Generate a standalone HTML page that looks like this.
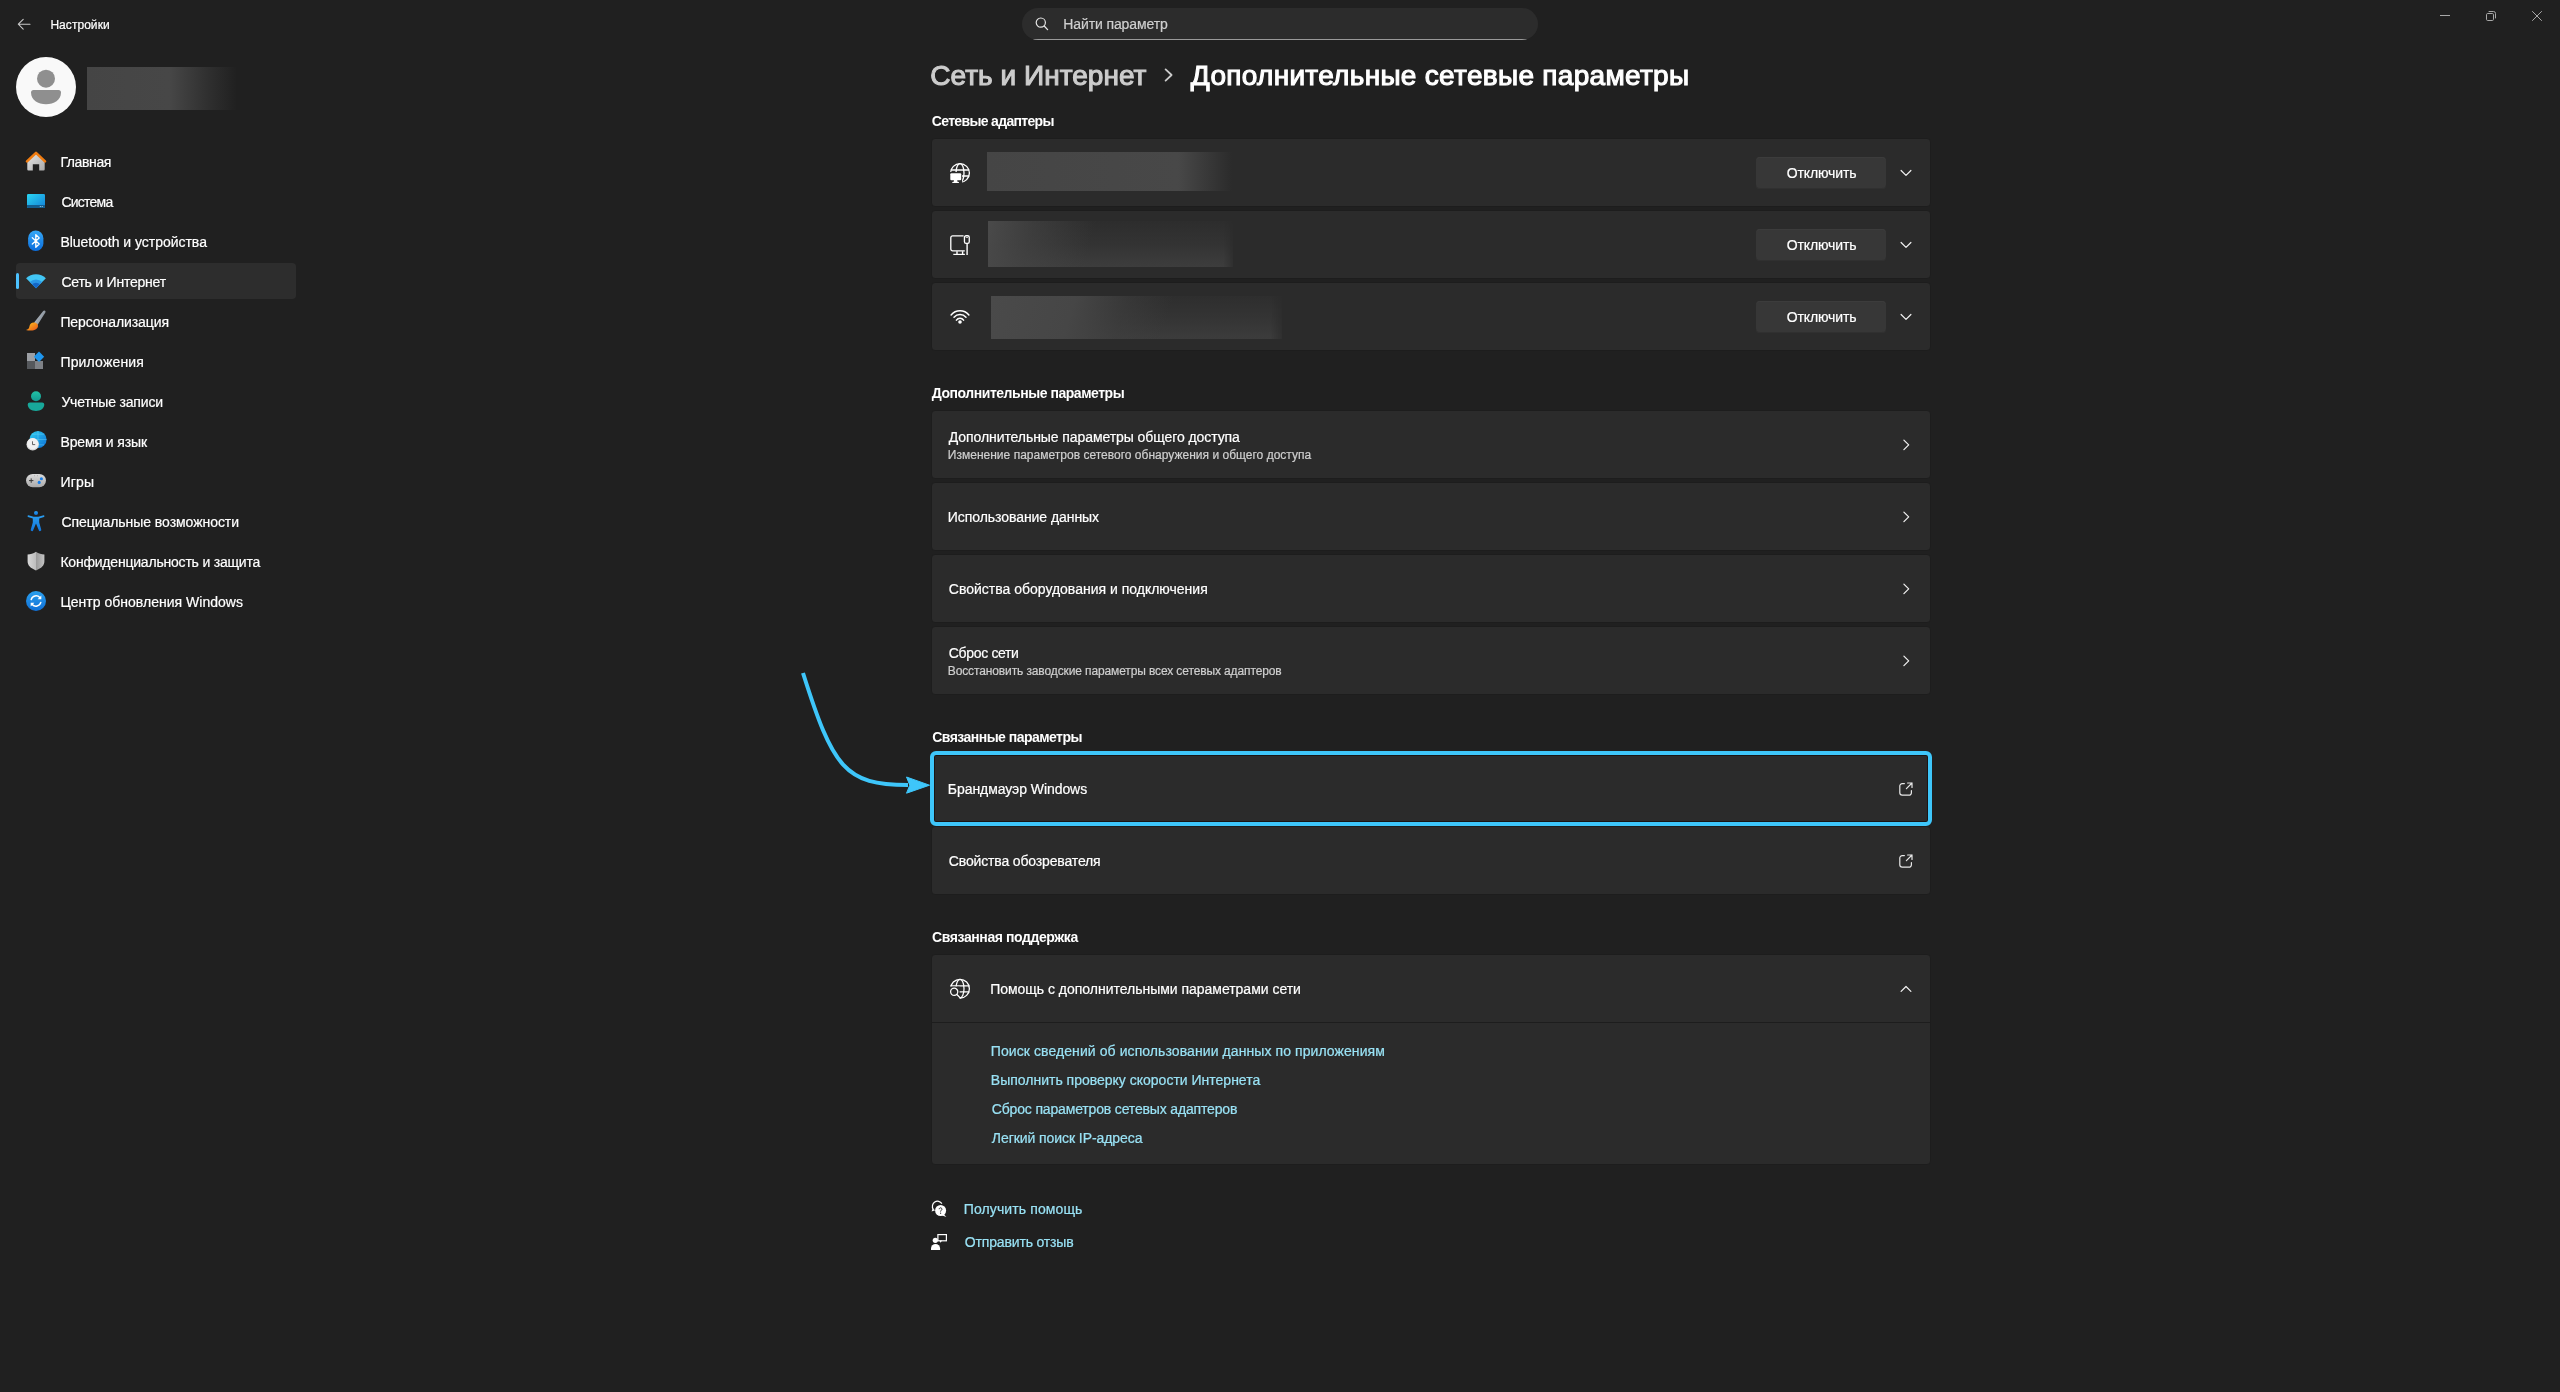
<!DOCTYPE html>
<html><head><meta charset="utf-8">
<style>
html,body{margin:0;padding:0;width:2560px;height:1392px;overflow:hidden;background:#202020;font-family:"Liberation Sans",sans-serif;}
.tx{position:absolute;white-space:pre;line-height:normal;}
.ab{position:absolute;}
.card{position:absolute;left:931px;width:998px;background:#2b2b2b;border:1px solid #1d1d1d;border-radius:4px;}
.btn{position:absolute;left:1756px;width:130px;height:32px;background:#373737;border-radius:4px;box-shadow:inset 0 1px 0 #3c3c3c, inset 0 -1px 0 #303030;}
svg{position:absolute;overflow:visible;}
</style></head><body>
<!-- back arrow -->
<svg class="ab" style="left:0;top:0" width="40" height="48"><path d="M30,24.2H18.5M23.2,19.3L18.3,24.2L23.2,29.1" fill="none" stroke="#c8c8c8" stroke-width="1.1" stroke-linecap="round" stroke-linejoin="round"/></svg>

<!-- search box -->
<div class="ab" style="left:1022px;top:8px;width:516px;height:32px;border-radius:16px;background:#2c2c2c;overflow:hidden"><div class="ab" style="left:0;top:31px;width:516px;height:1px;background:#9a9a9a"></div></div>
<svg style="left:1030px;top:12px" width="24" height="24"><circle cx="10.8" cy="10.6" r="4.6" fill="none" stroke="#e6e6e6" stroke-width="1.2"/><path d="M14.2,14L17.6,17.6" stroke="#e6e6e6" stroke-width="1.3" stroke-linecap="round"/></svg>

<!-- window controls -->
<div class="ab" style="left:2440px;top:15px;width:10px;height:1px;background:#a8a8a8"></div>
<svg style="left:2480px;top:5px" width="24" height="24"><rect x="6.5" y="8.5" width="7" height="7" rx="1.2" fill="none" stroke="#a8a8a8" stroke-width="1"/><path d="M8.6,6.5H13.5A2,2 0 0 1 15.5,8.5V13.4" fill="none" stroke="#a8a8a8" stroke-width="1"/></svg>
<svg style="left:2528px;top:7px" width="20" height="20"><path d="M4.2,4.2L13.8,13.8M13.8,4.2L4.2,13.8" stroke="#a8a8a8" stroke-width="1"/></svg>

<!-- avatar -->
<svg style="left:16px;top:57px" width="60" height="60"><circle cx="30" cy="30" r="30" fill="#f9f9f9"/><circle cx="30" cy="21.7" r="9" fill="#8f8f8f"/><path d="M17.5,33H42.5A2.5,2.5 0 0 1 45,35.5C45,43 38,47.2 30,47.2C22,47.2 15,43 15,35.5A2.5,2.5 0 0 1 17.5,33Z" fill="#8f8f8f"/></svg>
<div class="ab" style="left:87px;top:67px;width:150px;height:43px;background:linear-gradient(90deg,#454545 0%,#474747 55%,#303030 80%,#202020 100%)"></div>

<!-- nav selection -->
<div class="ab" style="left:16px;top:263px;width:280px;height:36px;background:#2d2d2d;border-radius:4px"></div>
<div class="ab" style="left:16px;top:273px;width:3px;height:16px;background:#4cc2ff;border-radius:2px"></div>

<!-- nav icons -->
<svg style="left:26px;top:151px" width="20" height="20">
 <defs><linearGradient id="hg" x1="0" y1="0" x2="1" y2="1"><stop offset="0" stop-color="#e8e8e8"/><stop offset="1" stop-color="#a9a9a9"/></linearGradient></defs>
 <path d="M1.3,10.6L10,2.6L18.7,10.6V18.3A1.2,1.2 0 0 1 17.5,19.6H13.2V13.3H6.8V19.6H2.5A1.2,1.2 0 0 1 1.3,18.3Z" fill="url(#hg)"/>
 <path d="M1,10.4L10,1.9L19,10.4" fill="none" stroke="#f07c10" stroke-width="2.6" stroke-linejoin="round" stroke-linecap="round"/>
</svg>
<svg style="left:26px;top:191px" width="20" height="20">
 <defs><linearGradient id="sg" x1="0" y1="0" x2="1" y2="1"><stop offset="0" stop-color="#2ad6f2"/><stop offset="1" stop-color="#1380d8"/></linearGradient></defs>
 <rect x="1" y="3" width="18" height="14" rx="1.3" fill="url(#sg)"/>
 <path d="M1,14H19V15.7A1.3,1.3 0 0 1 17.7,17H2.3A1.3,1.3 0 0 1 1,15.7Z" fill="#135d8f"/>
 <circle cx="14.3" cy="15.5" r="0.55" fill="#b8e4f8"/><circle cx="16.2" cy="15.5" r="0.55" fill="#b8e4f8"/>
</svg>
<svg style="left:26px;top:231px" width="20" height="20">
 <defs><linearGradient id="bg1" x1="0" y1="0" x2="0" y2="1"><stop offset="0" stop-color="#36a8f6"/><stop offset="1" stop-color="#0a6cdc"/></linearGradient></defs>
 <rect x="2.1" y="-0.4" width="15.3" height="20.4" rx="7.6" fill="url(#bg1)"/>
 <path d="M6.3,6.8L13.2,13L9.8,16.2V3.6L13.2,6.9L6.3,13.1" fill="none" stroke="#fff" stroke-width="1.3" stroke-linejoin="round" stroke-linecap="round"/>
</svg>
<svg style="left:26px;top:271px" width="20" height="20">
 <path d="M0.1,7.3A14,14 0 0 1 19.9,7.3L10,17.2Z" fill="#42c6f5"/>
 <path d="M3.85,11.05A8.7,8.7 0 0 1 16.15,11.05L10,17.2Z" fill="#2a96e6"/>
 <path d="M6.11,13.31A5.5,5.5 0 0 1 13.89,13.31L10,17.2Z" fill="#1466c6"/>
</svg>
<svg style="left:26px;top:311px" width="20" height="20">
 <defs><linearGradient id="pg" x1="0" y1="0" x2="1" y2="0.6"><stop offset="0" stop-color="#c9d0d8"/><stop offset="1" stop-color="#7a838d"/></linearGradient>
 <linearGradient id="og" x1="0" y1="0" x2="1" y2="1"><stop offset="0" stop-color="#ffc81e"/><stop offset="1" stop-color="#e9521a"/></linearGradient></defs>
 <path d="M17.24,0.05A1.3,1.3 0 0 1 19.36,1.55L11.5,14L8.1,11.6Z" fill="url(#pg)"/>
 <path d="M7.6,11.4C9.8,11.2 12,12.6 12,14.8C12,17.8 9,19.6 5,19.6C3,19.6 1,19.4 0,19C1.8,18.4 3,17.6 3.4,15.4C3.8,12.8 5.6,11.5 7.6,11.4Z" fill="url(#og)"/>
</svg>
<svg style="left:26px;top:351px" width="20" height="20">
 <rect x="1" y="2" width="8" height="8" fill="#9c9fa4"/><rect x="1" y="10" width="8" height="8" fill="#55585c"/><rect x="9" y="10" width="8" height="8" fill="#7e8186"/>
 <path d="M13,0.6L18.2,5.8L13,11L7.8,5.8Z" fill="#1e96ee"/>
</svg>
<svg style="left:26px;top:391px" width="20" height="20">
 <defs><linearGradient id="acg" x1="0" y1="0" x2="0" y2="1"><stop offset="0" stop-color="#22c2a6"/><stop offset="1" stop-color="#129a92"/></linearGradient></defs>
 <circle cx="10" cy="5.2" r="5" fill="url(#acg)"/>
 <path d="M3.9,11.4H16.1A2.2,2.2 0 0 1 18.3,13.6C18.3,17.4 14.6,20 10,20C5.4,20 1.7,17.4 1.7,13.6A2.2,2.2 0 0 1 3.9,11.4Z" fill="#18a89a"/>
</svg>
<svg style="left:26px;top:431px" width="20" height="20">
 <defs><linearGradient id="gg" x1="0" y1="0" x2="1" y2="1"><stop offset="0" stop-color="#2fd0f0"/><stop offset="1" stop-color="#0d6fd6"/></linearGradient></defs>
 <circle cx="12" cy="8.5" r="8.6" fill="url(#gg)"/>
 <path d="M12,0V17M3.4,8.5H20.6M6,3.2H18M6,13.8H18" stroke="#7fe0f8" stroke-width="0.5" opacity="0.7"/>
 <circle cx="6.7" cy="13.3" r="6.2" fill="#d7d7d7"/>
 <circle cx="6.7" cy="12.6" r="5.6" fill="#f0f0f0"/>
 <path d="M6.5,10.3V13.6H9.2" fill="none" stroke="#555" stroke-width="0.9"/>
</svg>
<svg style="left:26px;top:471px" width="20" height="20">
 <defs><linearGradient id="cg" x1="0" y1="0" x2="0" y2="1"><stop offset="0" stop-color="#dcdcdc"/><stop offset="1" stop-color="#a9a9a9"/></linearGradient></defs>
 <rect x="0" y="2.9" width="20" height="13.4" rx="6.7" fill="url(#cg)"/>
 <path d="M3,9.6H7.4M5.2,7.4V11.8" stroke="#3a3a3a" stroke-width="1"/>
 <circle cx="15.4" cy="7.7" r="1.55" fill="#1a7fe8"/><circle cx="13.2" cy="11.4" r="1.55" fill="#1a7fe8"/>
 <circle cx="8.7" cy="4.8" r="0.35" fill="#555"/><circle cx="11.3" cy="4.8" r="0.35" fill="#555"/>
</svg>
<svg style="left:26px;top:511px" width="20" height="20">
 <defs><linearGradient id="ag" x1="0" y1="0" x2="0" y2="1"><stop offset="0" stop-color="#2a9ef0"/><stop offset="1" stop-color="#1176dc"/></linearGradient></defs>
 <circle cx="10" cy="2" r="2" fill="url(#ag)"/>
 <path d="M2.3,4.3L7.7,5.8H12.3L17.7,4.3A1,1 0 0 1 18,6.1L13.2,7.6V11.4L15.2,18.5A1.2,1.2 0 0 1 12.8,19.3L10,12.6L7.2,19.3A1.2,1.2 0 0 1 4.8,18.5L6.8,11.4V7.6L2,6.1A1,1 0 0 1 2.3,4.3Z" fill="url(#ag)"/>
</svg>
<svg style="left:26px;top:551px" width="20" height="20">
 <defs><linearGradient id="shg" x1="0" y1="0" x2="1" y2="0"><stop offset="0" stop-color="#d8d8d8"/><stop offset="0.5" stop-color="#bdbdbd"/><stop offset="0.5" stop-color="#9a9a9a"/><stop offset="1" stop-color="#c4c4c4"/></linearGradient></defs>
 <path d="M10,0.8C12.6,2.6 15.5,3.4 18.4,3.4V10.3C18.4,14.4 15.5,17.3 10,19.4C4.5,17.3 1.6,14.4 1.6,10.3V3.4C4.5,3.4 7.4,2.6 10,0.8Z" fill="url(#shg)"/>
</svg>
<svg style="left:26px;top:591px" width="20" height="20">
 <defs><linearGradient id="ug" x1="0" y1="0" x2="0" y2="1"><stop offset="0" stop-color="#2aa0ee"/><stop offset="1" stop-color="#0f6fd6"/></linearGradient></defs>
 <circle cx="10" cy="10" r="10" fill="url(#ug)"/>
 <path d="M5.2,8.6A5,5 0 0 1 13.8,6.6M14.8,11.4A5,5 0 0 1 6.2,13.4" fill="none" stroke="#fff" stroke-width="1.5" stroke-linecap="round"/>
 <path d="M15.3,4.6V8.3H11.6Z" fill="#fff"/><path d="M4.7,15.4V11.7H8.4Z" fill="#fff"/>
</svg>

<!-- chevron in breadcrumb -->
<svg style="left:1160px;top:64px" width="20" height="24"><path d="M5.6,5.4L11.6,11L5.6,16.6" fill="none" stroke="#cccccc" stroke-width="1.8" stroke-linecap="round" stroke-linejoin="round"/></svg>

<!-- adapter cards -->
<div class="card" style="top:138px;height:67px"></div>
<div class="card" style="top:210px;height:67px"></div>
<div class="card" style="top:282px;height:67px"></div>
<div class="ab" style="left:987px;top:152px;width:245px;height:39px;background:linear-gradient(90deg,#454545 0%,#484848 78%,#2b2b2b 100%)"></div>
<div class="ab" style="left:988px;top:221px;width:245px;height:46px;background:linear-gradient(105deg,#4a4a4a 0%,rgba(70,70,70,0.6) 18%,rgba(60,60,60,0) 42%),linear-gradient(180deg,#2d2d2d 0%,#333 50%,#3d3d3d 100%);-webkit-mask-image:linear-gradient(90deg,#000 96%,rgba(0,0,0,0.3) 100%)"></div>
<div class="ab" style="left:991px;top:296px;width:291px;height:43px;background:linear-gradient(108deg,#4a4a4a 0%,#464646 28%,rgba(64,64,64,0.5) 45%,rgba(60,60,60,0) 60%),linear-gradient(180deg,#2e2e2e 0%,#343434 50%,#3c3c3c 100%);-webkit-mask-image:linear-gradient(90deg,#000 96%,rgba(0,0,0,0.3) 100%)"></div>
<div class="btn" style="top:157px"></div>
<div class="btn" style="top:229px"></div>
<div class="btn" style="top:301px"></div>
<svg style="left:1896px;top:164px" width="20" height="20"><path d="M5.1,6.5L10,11.4L14.9,6.5" fill="none" stroke="#f2f2f2" stroke-width="1.2" stroke-linecap="round" stroke-linejoin="round"/></svg>
<svg style="left:1896px;top:236px" width="20" height="20"><path d="M5.1,6.5L10,11.4L14.9,6.5" fill="none" stroke="#f2f2f2" stroke-width="1.2" stroke-linecap="round" stroke-linejoin="round"/></svg>
<svg style="left:1896px;top:308px" width="20" height="20"><path d="M5.1,6.5L10,11.4L14.9,6.5" fill="none" stroke="#f2f2f2" stroke-width="1.2" stroke-linecap="round" stroke-linejoin="round"/></svg>
<!-- adapter icons -->
<svg style="left:950px;top:163px" width="20" height="20">
 <circle cx="10" cy="10" r="9.4" fill="none" stroke="#fff" stroke-width="1.3"/>
 <ellipse cx="10" cy="10" rx="4" ry="9.4" fill="none" stroke="#fff" stroke-width="1.3"/>
 <path d="M0.8,7H19.2M0.8,13H19.2" stroke="#fff" stroke-width="1.3"/>
 <rect x="-0.5" y="9" width="12.5" height="11" fill="#2b2b2b"/>
 <rect x="0.3" y="10.2" width="10.9" height="7" rx="1" fill="#fff"/>
 <path d="M3.9,17H7.3V18.5Q7.5,18.9 8.9,19V20H2.3V19Q3.7,18.9 3.9,18.5Z" fill="#fff"/>
</svg>
<svg style="left:950px;top:235px" width="20" height="20">
 <path d="M13.6,0.9H2.6A1.8,1.8 0 0 0 0.8,2.7V14A1.8,1.8 0 0 0 2.6,15.8H14.8" fill="none" stroke="#fff" stroke-width="1.3"/>
 <path d="M7,16.2V19M12.6,16.2V19" stroke="#fff" stroke-width="1.4"/>
 <path d="M3.3,19.4H14.9" stroke="#fff" stroke-width="1.2"/>
 <rect x="14.45" y="0.75" width="4.8" height="7.6" rx="1.6" fill="none" stroke="#fff" stroke-width="1.3"/>
 <rect x="15.7" y="1.9" width="2.3" height="1" fill="#d8d8d8"/>
 <path d="M17.1,8.9V20" stroke="#fff" stroke-width="1.4"/>
</svg>
<svg style="left:950px;top:307px" width="20" height="20">
 <path d="M1.1,7.9A11.6,11.6 0 0 1 18.9,7.9" fill="none" stroke="#fff" stroke-width="1.5" stroke-linecap="round"/>
 <path d="M4,10.3A8,8 0 0 1 16,10.3" fill="none" stroke="#fff" stroke-width="1.5" stroke-linecap="round"/>
 <path d="M6.4,13.1A4.45,4.45 0 0 1 13.6,13.1" fill="none" stroke="#fff" stroke-width="1.5" stroke-linecap="round"/>
 <circle cx="10" cy="15" r="1.8" fill="#fff"/>
</svg>

<!-- additional settings cards -->
<div class="card" style="top:410px;height:67px"></div>
<div class="card" style="top:482px;height:67px"></div>
<div class="card" style="top:554px;height:67px"></div>
<div class="card" style="top:626px;height:67px"></div>
<svg style="left:1896px;top:435px" width="20" height="20"><path d="M7.9,5.1L12.7,9.9L7.9,14.7" fill="none" stroke="#f2f2f2" stroke-width="1.2" stroke-linecap="round" stroke-linejoin="round"/></svg>
<svg style="left:1896px;top:507px" width="20" height="20"><path d="M7.9,5.1L12.7,9.9L7.9,14.7" fill="none" stroke="#f2f2f2" stroke-width="1.2" stroke-linecap="round" stroke-linejoin="round"/></svg>
<svg style="left:1896px;top:579px" width="20" height="20"><path d="M7.9,5.1L12.7,9.9L7.9,14.7" fill="none" stroke="#f2f2f2" stroke-width="1.2" stroke-linecap="round" stroke-linejoin="round"/></svg>
<svg style="left:1896px;top:651px" width="20" height="20"><path d="M7.9,5.1L12.7,9.9L7.9,14.7" fill="none" stroke="#f2f2f2" stroke-width="1.2" stroke-linecap="round" stroke-linejoin="round"/></svg>

<!-- related settings -->
<div class="card" style="top:754px;height:67px"></div>
<div class="ab" style="left:930px;top:751px;width:994px;height:67px;border:4px solid #3ec6fa;border-radius:6px;box-shadow:inset 0 0 0 1px #1a1515"></div>
<div class="card" style="top:826px;height:67px"></div>
<svg style="left:1896px;top:779px" width="20" height="20"><path d="M8.4,4.6H6.2A2.4,2.4 0 0 0 3.8,7V13.8A2.4,2.4 0 0 0 6.2,16.2H13A2.4,2.4 0 0 0 15.4,13.8V11.6M10.4,9.6L16,4M11.6,4H16V8.4" fill="none" stroke="#e8e8e8" stroke-width="1.2" stroke-linecap="round" stroke-linejoin="round"/></svg>
<svg style="left:1896px;top:851px" width="20" height="20"><path d="M8.4,4.6H6.2A2.4,2.4 0 0 0 3.8,7V13.8A2.4,2.4 0 0 0 6.2,16.2H13A2.4,2.4 0 0 0 15.4,13.8V11.6M10.4,9.6L16,4M11.6,4H16V8.4" fill="none" stroke="#e8e8e8" stroke-width="1.2" stroke-linecap="round" stroke-linejoin="round"/></svg>

<!-- arrow annotation -->
<svg style="left:0;top:0" width="2560" height="1392">
 <path d="M803,673C833,768 845,785 908,785" fill="none" stroke="#3ec6fa" stroke-width="4"/>
 <path d="M929.5,785.2L906.5,777L909.8,785.2L906.5,793.2Z" fill="#3ec6fa" stroke="#3ec6fa" stroke-width="1" stroke-linejoin="round"/>
</svg>

<!-- related support expander -->
<div class="card" style="top:954px;height:209px"></div>
<div class="ab" style="left:932px;top:1022px;width:998px;height:1px;background:#1d1d1d"></div>
<svg style="left:950px;top:979px" width="20" height="20">
 <circle cx="10" cy="9.7" r="9.4" fill="none" stroke="#fff" stroke-width="1.25"/>
 <ellipse cx="10" cy="9.7" rx="4" ry="9.4" fill="none" stroke="#fff" stroke-width="1.25"/>
 <path d="M0.6,6.8H19.4M0.6,12.8H19.4" stroke="#fff" stroke-width="1.3"/>
 <path d="M-1,7.6H9.6V20.5H-1Z" fill="#2b2b2b"/>
 <circle cx="4.2" cy="12.8" r="3.6" fill="#2b2b2b" stroke="#fff" stroke-width="1.25"/>
 <path d="M6.9,15.5L10.2,18.9" stroke="#fff" stroke-width="1.3" stroke-linecap="round"/>
</svg>
<svg style="left:1896px;top:979px" width="20" height="20"><path d="M5.1,12.4L10,7.5L14.9,12.4" fill="none" stroke="#f2f2f2" stroke-width="1.2" stroke-linecap="round" stroke-linejoin="round"/></svg>

<!-- help links icons -->
<svg style="left:930px;top:1200px" width="20" height="20">
 <path d="M3.2,9.2A4.9,4.9 0 0 1 11.9,3.6" fill="none" stroke="#fff" stroke-width="1.2"/>
 <path d="M1.6,11.6L2.7,8.4L5.2,10.3Z" fill="#fff"/>
 <circle cx="10.6" cy="10.5" r="5.5" fill="#fff"/>
 <path d="M13.6,14L16.4,17L12.2,15.6Z" fill="#fff"/>
 <path d="M9.2,9.2A1.35,1.35 0 1 1 11.3,10.3C10.7,10.7 10.6,11 10.6,11.6" fill="none" stroke="#202020" stroke-width="0.95"/>
 <circle cx="10.6" cy="13.2" r="0.6" fill="#202020"/>
</svg>
<svg style="left:930px;top:1232px" width="20" height="20">
 <circle cx="5.3" cy="8.3" r="2.6" fill="#fff"/>
 <path d="M1,18V16.4A4.55,4.3 0 0 1 10.1,16.4V18Z" fill="#fff"/>
 <rect x="7.9" y="2.6" width="8.5" height="6.2" fill="none" stroke="#fff" stroke-width="1.2"/>
 <path d="M9.4,8.6L10.4,10.8L12.2,8.6Z" fill="#fff"/>
</svg>

<div style="position:absolute;left:0;top:0;width:2560px;height:1392px;will-change:transform">
<div class=tx style='left:50.4px;top:18.0px;font-size:12px;font-weight:400;color:#ffffff;letter-spacing:0.050px;-webkit-text-stroke:0.2px #ffffff'>Настройки</div>
<div class=tx style='left:1063.3px;top:16.0px;font-size:14px;font-weight:400;color:#cfcfcf;letter-spacing:-0.115px;-webkit-text-stroke:0.2px #cfcfcf'>Найти параметр</div>
<div class=tx style='left:930.2px;top:60.0px;font-size:28px;font-weight:400;color:#cccccc;letter-spacing:0.043px;-webkit-text-stroke:1.1px #cccccc'>Сеть и Интернет</div>
<div class=tx style='left:1190.8px;top:60.0px;font-size:28px;font-weight:400;color:#ffffff;letter-spacing:0.306px;-webkit-text-stroke:1.1px #ffffff'>Дополнительные сетевые параметры</div>
<div class=tx style='left:60.4px;top:154.3px;font-size:14px;font-weight:400;color:#ffffff;letter-spacing:-0.383px;-webkit-text-stroke:0.2px #ffffff'>Главная</div>
<div class=tx style='left:61.4px;top:194.3px;font-size:14px;font-weight:400;color:#ffffff;letter-spacing:-0.767px;-webkit-text-stroke:0.2px #ffffff'>Система</div>
<div class=tx style='left:60.4px;top:234.3px;font-size:14px;font-weight:400;color:#ffffff;letter-spacing:-0.017px;-webkit-text-stroke:0.2px #ffffff'>Bluetooth и устройства</div>
<div class=tx style='left:61.4px;top:274.3px;font-size:14px;font-weight:400;color:#ffffff;letter-spacing:-0.221px;-webkit-text-stroke:0.2px #ffffff'>Сеть и Интернет</div>
<div class=tx style='left:60.4px;top:314.3px;font-size:14px;font-weight:400;color:#ffffff;letter-spacing:-0.085px;-webkit-text-stroke:0.2px #ffffff'>Персонализация</div>
<div class=tx style='left:60.4px;top:354.3px;font-size:14px;font-weight:400;color:#ffffff;letter-spacing:0.183px;-webkit-text-stroke:0.2px #ffffff'>Приложения</div>
<div class=tx style='left:61.4px;top:394.3px;font-size:14px;font-weight:400;color:#ffffff;letter-spacing:-0.162px;-webkit-text-stroke:0.2px #ffffff'>Учетные записи</div>
<div class=tx style='left:60.4px;top:434.3px;font-size:14px;font-weight:400;color:#ffffff;letter-spacing:-0.100px;-webkit-text-stroke:0.2px #ffffff'>Время и язык</div>
<div class=tx style='left:60.4px;top:474.3px;font-size:14px;font-weight:400;color:#ffffff;letter-spacing:0.217px;-webkit-text-stroke:0.2px #ffffff'>Игры</div>
<div class=tx style='left:61.4px;top:514.3px;font-size:14px;font-weight:400;color:#ffffff;letter-spacing:-0.050px;-webkit-text-stroke:0.2px #ffffff'>Специальные возможности</div>
<div class=tx style='left:60.4px;top:554.3px;font-size:14px;font-weight:400;color:#ffffff;letter-spacing:-0.206px;-webkit-text-stroke:0.2px #ffffff'>Конфиденциальность и защита</div>
<div class=tx style='left:60.4px;top:594.3px;font-size:14px;font-weight:400;color:#ffffff;letter-spacing:0.017px;-webkit-text-stroke:0.2px #ffffff'>Центр обновления Windows</div>
<div class=tx style='left:931.8px;top:113.0px;font-size:14px;font-weight:700;color:#ffffff;letter-spacing:-0.667px'>Сетевые адаптеры</div>
<div class=tx style='left:931.8px;top:385.0px;font-size:14px;font-weight:700;color:#ffffff;letter-spacing:-0.461px'>Дополнительные параметры</div>
<div class=tx style='left:932.2px;top:729.4px;font-size:14px;font-weight:700;color:#ffffff;letter-spacing:-0.528px'>Связанные параметры</div>
<div class=tx style='left:932.1px;top:929.0px;font-size:14px;font-weight:700;color:#ffffff;letter-spacing:-0.411px'>Связанная поддержка</div>
<div class=tx style='left:1786.8px;top:165.3px;font-size:14px;font-weight:400;color:#ffffff;letter-spacing:-0.125px;-webkit-text-stroke:0.2px #ffffff'>Отключить</div>
<div class=tx style='left:1786.8px;top:237.3px;font-size:14px;font-weight:400;color:#ffffff;letter-spacing:-0.125px;-webkit-text-stroke:0.2px #ffffff'>Отключить</div>
<div class=tx style='left:1786.8px;top:309.3px;font-size:14px;font-weight:400;color:#ffffff;letter-spacing:-0.125px;-webkit-text-stroke:0.2px #ffffff'>Отключить</div>
<div class=tx style='left:948.8px;top:429.0px;font-size:14px;font-weight:400;color:#ffffff;letter-spacing:-0.079px;-webkit-text-stroke:0.2px #ffffff'>Дополнительные параметры общего доступа</div>
<div class=tx style='left:947.8px;top:448.3px;font-size:12px;font-weight:400;color:#cfcfcf;letter-spacing:0.014px;-webkit-text-stroke:0.2px #cfcfcf'>Изменение параметров сетевого обнаружения и общего доступа</div>
<div class=tx style='left:947.8px;top:509.0px;font-size:14px;font-weight:400;color:#ffffff;letter-spacing:-0.058px;-webkit-text-stroke:0.2px #ffffff'>Использование данных</div>
<div class=tx style='left:948.8px;top:581.0px;font-size:14px;font-weight:400;color:#ffffff;letter-spacing:0.000px;-webkit-text-stroke:0.2px #ffffff'>Свойства оборудования и подключения</div>
<div class=tx style='left:948.8px;top:645.0px;font-size:14px;font-weight:400;color:#ffffff;letter-spacing:-0.333px;-webkit-text-stroke:0.2px #ffffff'>Сброс сети</div>
<div class=tx style='left:947.8px;top:664.4px;font-size:12px;font-weight:400;color:#cfcfcf;letter-spacing:-0.120px;-webkit-text-stroke:0.2px #cfcfcf'>Восстановить заводские параметры всех сетевых адаптеров</div>
<div class=tx style='left:947.8px;top:781.0px;font-size:14px;font-weight:400;color:#ffffff;letter-spacing:-0.059px;-webkit-text-stroke:0.2px #ffffff'>Брандмауэр Windows</div>
<div class=tx style='left:948.8px;top:853.0px;font-size:14px;font-weight:400;color:#ffffff;letter-spacing:-0.150px;-webkit-text-stroke:0.2px #ffffff'>Свойства обозревателя</div>
<div class=tx style='left:990.2px;top:981.0px;font-size:14px;font-weight:400;color:#ffffff;letter-spacing:-0.020px;-webkit-text-stroke:0.2px #ffffff'>Помощь с дополнительными параметрами сети</div>
<div class=tx style='left:990.8px;top:1043.3px;font-size:14px;font-weight:400;color:#99e2f5;letter-spacing:0.083px;-webkit-text-stroke:0.2px #99e2f5'>Поиск сведений об использовании данных по приложениям</div>
<div class=tx style='left:990.8px;top:1072.2px;font-size:14px;font-weight:400;color:#99e2f5;letter-spacing:0.000px;-webkit-text-stroke:0.2px #99e2f5'>Выполнить проверку скорости Интернета</div>
<div class=tx style='left:991.8px;top:1101.2px;font-size:14px;font-weight:400;color:#99e2f5;letter-spacing:-0.161px;-webkit-text-stroke:0.2px #99e2f5'>Сброс параметров сетевых адаптеров</div>
<div class=tx style='left:991.8px;top:1130.2px;font-size:14px;font-weight:400;color:#99e2f5;letter-spacing:-0.071px;-webkit-text-stroke:0.2px #99e2f5'>Легкий поиск IP-адреса</div>
<div class=tx style='left:963.8px;top:1201.1px;font-size:14px;font-weight:400;color:#99e2f5;letter-spacing:0.114px;-webkit-text-stroke:0.2px #99e2f5'>Получить помощь</div>
<div class=tx style='left:964.8px;top:1233.9px;font-size:14px;font-weight:400;color:#99e2f5;letter-spacing:-0.157px;-webkit-text-stroke:0.2px #99e2f5'>Отправить отзыв</div>
</div>
</body></html>
